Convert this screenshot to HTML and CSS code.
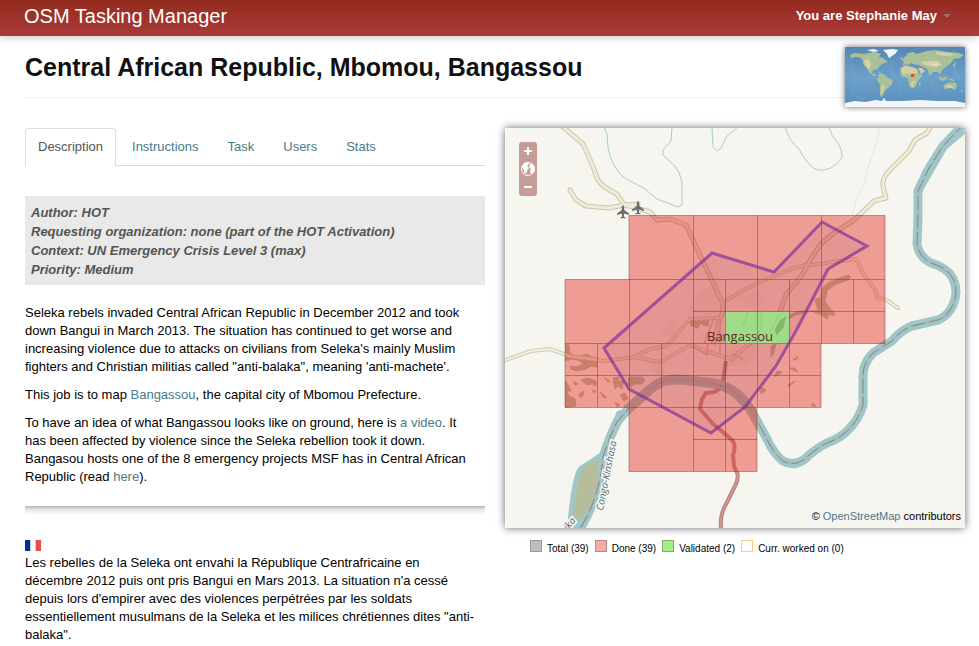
FILE: index.html
```html
<!DOCTYPE html>
<html lang="en">
<head>
<meta charset="utf-8">
<title>OSM Tasking Manager</title>
<link rel="stylesheet" href="styles.css">
</head>
<body>
<header class="topbar">
  <a class="brand" href="#">OSM Tasking Manager</a>
  <button class="user-menu" type="button">You are Stephanie May <span class="caret"></span></button>
</header>
<main class="container">
  <div class="page-header">
    <h1>Central African Republic, Mbomou, Bangassou</h1>
    <svg class="world" viewBox="0 0 120 60" role="img" aria-label="World location">
      <defs>
        <linearGradient id="sea" x1="0" y1="0" x2="0" y2="1"><stop offset="0" stop-color="#5687b4"/><stop offset=".5" stop-color="#6ba0c9"/><stop offset="1" stop-color="#5a8fbe"/></linearGradient>
      </defs>
      <rect width="120" height="60" fill="url(#sea)"/>
      <g fill="none" stroke="#82b1d3" stroke-width="3" opacity=".2">
        <path d="M6 20Q14 30 9 40T20 52M48 12Q42 24 51 32T54 50M88 30Q84 40 93 48M112 18Q105 26 116 32"/>
      </g>
      <g fill="#a8c199">
        <path d="M5 8L9 6L17 7L24 6L30 5L36 7L34 10L38 11L43 15L37 17L34 20L32 23L31 22L28 23L27 26L30 27L32 29L29 29L24 25L21 20L18 17L18 13L14 10L9 10L6 12Z"/>
        <path d="M34 27L39 27L43 31L48 33L47 37L44 40L41 43L38 47L37 51L35 48L35 38L32 33Z"/>
        <path d="M57 19L59 15L57 13L60 10L63 6L68 5L72 7L82 4L91 3L102 5L114 6L119 8L115 11L109 12L106 16L102 19L98 22L95 27L92 25L88 25L85 29L82 22L78 20L73 18L68 17L66 16L63 18L61 17Z"/>
        <path d="M55 22L60 18L68 20L72 22L74 27L78 28L73 34L71 39L67 42L64 38L63 31L56 29Z"/>
        <path d="M99 38L104 35L107 36L110 35L112 39L110 43L106 41L99 42Z"/>
        <path d="M94 29L98 31L101 29L102 32L98 34L94 32ZM103 31L110 33L108 34L103 32ZM108 18L111 14L110 19L108 21ZM55 11L57 10L58 13L56 13ZM74 36L76 34L75 39L74 38ZM116 43L118 42L116 46ZM33 25L37 26L35 27Z"/>
      </g>
      <g fill="#dbcfa6" opacity=".9">
        <path d="M19 13L23 12L26 16L25 21L23 22L20 18ZM56 21L61 19L72 22L73 26L57 27ZM73 21L77 21L80 24L76 27ZM75 15L83 14L93 14L97 18L91 20L83 19L80 18ZM101 38L107 38L108 41L102 41ZM37 38L40 38L37 49L36 45ZM67 34L70 34L68 41L66 38ZM91 5L105 6L110 8L103 9L92 8Z"/>
      </g>
      <path d="M38 3L47 2L53 3L50 7L44 11L42 7ZM22 3L29 2L34 4L28 5ZM0 59L0 56L10 54L20 55L31 53L37 54L39 51L41 54L57 54L75 53L93 54L110 54L120 56V60H0Z" fill="#f3f5f9"/>
      <path d="M86 17L92 16L94 19L88 19Z" fill="#dfe5e9" opacity=".6"/>
      <rect x="66" y="27" width="3" height="3" fill="#f03c28"/>
    </svg>
  </div>
  <div class="columns">
    <section class="info">
      <nav class="tabs">
        <a class="tab active" href="#">Description</a>
        <a class="tab" href="#">Instructions</a>
        <a class="tab" href="#">Task</a>
        <a class="tab" href="#">Users</a>
        <a class="tab" href="#">Stats</a>
      </nav>
      <div class="meta">
        Author: HOT<br>
        Requesting organization: none (part of the HOT Activation)<br>
        Context: UN Emergency Crisis Level 3 (max)<br>
        Priority: Medium
      </div>
      <p>Seleka rebels invaded Central African Republic in December 2012 and took<br>
      down Bangui in March 2013. The situation has continued to get worse and<br>
      increasing violence due to attacks on civilians from Seleka's mainly Muslim<br>
      fighters and Christian militias called "anti-balaka", meaning 'anti-machete'.</p>
      <p>This job is to map <a href="#">Bangassou</a>, the capital city of Mbomou Prefecture.</p>
      <p>To have an idea of what Bangassou looks like on ground, here is <a href="#">a video</a>. It<br>
      has been affected by violence since the Seleka rebellion took it down.<br>
      Bangasou hosts one of the 8 emergency projects MSF has in Central African<br>
      Republic (read <a href="#">here</a>).</p>
      <hr class="divider">
      <svg class="flag" viewBox="0 0 16 11" role="img" aria-label="Français"><path fill="#fff" d="M0 0h16v11H0z"/><path fill="#00318f" d="M0 0h5v11H0z"/><path fill="#c5cbe4" d="M5 0h1v11H5z"/><path fill="#f3c4c2" d="M10 0h1v11h-1z"/><path fill="#e1504b" d="M11 0h5v11h-5z"/></svg>
      <p lang="fr">Les rebelles de la Seleka ont envahi la République Centrafricaine en<br>
      décembre 2012 puis ont pris Bangui en Mars 2013. La situation n'a cessé<br>
      depuis lors d'empirer avec des violences perpétrées par les soldats<br>
      essentiellement musulmans de la Seleka et les milices chrétiennes dites "anti-<br>balaka".</p>
    </section>
    <section class="map-column">
      <div class="map">
        <svg class="map-canvas" viewBox="505 128 460 400" role="img" aria-label="Task grid over Bangassou">
          <defs>
            <path id="river" d="M966 122L943 146L928 170L918 191V217L917 244Q919 257 931 263Q948 268 953 279Q959 291 953 305Q948 316 938 320L912 326Q901 330 892 341L873 353Q863 363 863 376V405Q859 419 849 429Q841 438 827 443Q815 449 805 459Q794 467 783 461Q773 453 767 439L755 417Q744 398 733 391Q723 385 712 383L693 381Q677 378 664 381Q652 386 643 396L629 408L617 422Q609 438 603 457Q602 472 598 487Q593 507 580 529"/>
            <clipPath id="area"><path d="M629 215.500H885V343.500H821V407.500H757V471.500H629V407.500H565V279.500H629Z"/></clipPath>
            <g id="roads">
              <path d="M562 126L583 144Q590 158 598 180Q602 187 617 194Q624 207 629 206L650 212L657 220L670 219L686 225L722 302Q725 311 720 318L713 345"/>
              <path d="M570 190L576 200L586 206L609 208L624 205L638 204"/>
              <path d="M930 128L927 133L915 140L909 151L889 171Q882 178 883 186L886 198L874 201L853 221Q832 233 822 243L812 257L802 275L786 295L779 315L770 332Q762 338 750 343"/>
            </g>
            <g id="minor-roads">
              <path d="M750 343L732 359L718 355L691 345L660 362L634 357L605 361L569 356L550 349L531 351L503 361"/>
              <path d="M634 357L650 349L667 346L690 319L722 318M725 301L755 284L780 274Q797 265 811 265L856 259L864 275L876 291L877 298L885 299L898 308"/>
            </g>
          </defs>
          <rect x="505" y="128" width="460" height="400" fill="#f6f5f0"/>
          <g fill="none" stroke="#a4cfd0" stroke-width="1">
            <path d="M604 127L607 134L608 148Q611 165 623 177L645 189L657 199Q668 203 678 207L682 205V182Q680 172 675 166L663 155L663 150L671 141L672 127"/>
            <path d="M712 127L713 147L717 151L721 148L727 136L738 127M785 127Q789 141 799 149Q809 168 818 170Q831 172 842 158Q843 151 838 143Q831 136 829 127"/>
          </g>
          <path d="M879 128Q878 144 868 166Q866 183 856 200Q855 210 848 224" fill="none" stroke="#e9e5dc"/>
          <path d="M567 529Q572 470 580 466L600 453L617 411L629 408L614 439L606 460L602 486L593 507L579 529Z" fill="#9cc8c8"/>
          <use href="#river" fill="none" stroke="#9cc8c8" stroke-width="9" stroke-linejoin="round"/>
          <path d="M960 125L937 150L921 178L918 191L926 185L947 149L966 133Z" fill="#9cc8c8"/>
          <path d="M599 460Q583 464 579 476L572 516L580 520L587 511Q597 498 598 481Z" fill="#b5bd9c"/>
          <use href="#river" fill="none" stroke="#b0b6ba" stroke-width="2"/>
          <use href="#river" fill="none" stroke="#88868d" stroke-width="1" stroke-dasharray="14 4"/>
          <g fill="none" stroke-linejoin="round" stroke-linecap="round">
            <use href="#minor-roads" stroke="#d2ccb0" stroke-width="4"/>
            <use href="#roads" stroke="#cdc6a6" stroke-width="5"/>
            <use href="#minor-roads" stroke="#f1efe4" stroke-width="2"/>
            <use href="#roads" stroke="#efecdd" stroke-width="3"/>
          </g>
          <path d="M736 470Q740 477 735 486L724 508Q720 517 721 529" fill="none" stroke="#b97e77" stroke-width="4"/>
          <path d="M736 470Q740 477 735 486L724 508Q720 517 721 529" fill="none" stroke="#cc9790" stroke-width="2"/>

          <!-- completed tasks -->
          <g clip-path="url(#area)">
            <rect x="565" y="215" width="320" height="257" fill="#ef9d94"/>
            <g fill="#c97f69" stroke="#c97f69" stroke-linejoin="round">
              <path d="M565 344L569 345L570 353L578 357L587 354L592 357L597 358V367L591 366L586 369L577 371L571 369L570 366L576 367L584 364L578 360L572 359L565 361Z"/>
              <path d="M565 380L568 385L571 391L567 391L568 395L575 399L576 406L565 408ZM581 380L588 378L596 381L596 386L592 384L587 385ZM579 394L584 391L583 396L580 397ZM604 377L610 381L608 382ZM613 378L619 377L618 382L624 380L622 389L618 386L615 389ZM629 377L642 377L645 380L642 384L635 384L631 387L628 384ZM600 392L604 395L607 398L603 397ZM620 395L625 393L628 399L624 401ZM615 402L620 405L617 407ZM573 381L578 384L575 385ZM592 390L596 391L594 393Z"/>
              <path d="M821 289L828 283L839 278L849 275L851 277L848 280L834 285L827 291L825 301L831 310L834 312V316L829 314L827 319L821 315L812 311L796 315L783 322L779 327L776 338L771 342L776 325L786 316L800 311L818 311L815 299L821 298ZM771 346L776 343L774 353L771 357ZM794 359L798 356L796 360L793 359ZM790 368L795 368L798 372L793 370ZM777 371L782 372L777 376L774 376ZM761 387L766 390L761 394ZM788 385L795 381L789 387ZM812 403L816 406H812Z"/>
            </g>
            <path d="M689 317H709V326H704L701 324L697 329L690 325Z" fill="#c97f69"/>
            <g fill="#e28a81" opacity=".25"><path d="M691 300L707 288L718 292L724 302L722 318L702 318L687 313ZM725 355L736 346L760 344L748 367L731 366ZM666 322L674 318L682 331L671 338L661 332ZM738 297L758 289L769 303L751 308ZM649 359L666 360L663 376L650 371Z"/></g>
            <g fill="none" stroke-linejoin="round">
              <use href="#minor-roads" stroke="#db8475" stroke-width="4"/>
              <use href="#roads" stroke="#d47b6b" stroke-width="5"/>
              <use href="#minor-roads" stroke="#ea968b" stroke-width="2"/>
              <use href="#roads" stroke="#e59385" stroke-width="3"/>
              <path d="M704 344L714 318M720 318V354M690 345L707 355L708 343M743 359L732 354" stroke="#da8576" stroke-width="2"/>
              <use href="#river" stroke="#ba817c" stroke-width="10"/>
              <use href="#river" stroke="#d36a65" stroke-width="1"/>
              <path d="M726 361L723 381" stroke="#ca655e" stroke-width="4"/>
              <path d="M718 390L714 392L706 393L702 399L700 409L713 424L724 433L733 441Q736 447 733 455L734 466L738 476" stroke="#cf655f" stroke-width="4" stroke-linecap="round"/>
            </g>
          </g>
          <!-- validated tasks -->
          <rect x="725" y="312" width="64" height="32" fill="#a2e889"/>
          <g fill="#80c168"><path d="M787 316L780 320L775 329L776 336L784 327L785 320Z"/></g>
          <path d="M761 312V328L755 340M748 312L743 325M779 315L770 332" fill="none" stroke="#8ed977"/>
          <path d="M604 348L712 253L774 272L822 222L867 246L828 269L797 329L776 366L745 407L711 433L629 389Z" fill="#855a85" fill-opacity=".09"/>
          <g fill="none" stroke="#5a2820" stroke-opacity=".4" stroke-width="1">
            <path d="M629 215.500H885V343.500H821V407.500H757V471.500H629V407.500H565V279.500H629Z"/>
            <path d="M629 279.500H885M693 311.500H885M565 343.500H821M565 375.500H821M629 407.500H757M693 439.500H757"/>
            <path d="M597.500 343V407M629.500 279V407M661.500 343V407M693.500 215V471M725.500 279V471M757.500 215V407M789.500 279V407M821.500 215V343M853.500 279V343"/>
          </g>
          <text class="town" x="707" y="341">Bangassou</text>
          <path d="M604 348L712 253L774 272L822 222L867 246L828 269L797 329L776 366L745 407L711 433L629 389Z" fill="none" stroke="#7a2a9b" stroke-opacity=".65" stroke-width="3"/>
          <g fill="#6b6b6b">
            <path id="plane" d="M623 205Q624.500 206 624.200 210L629 213.500V215L624.200 213.500L623.800 216.500L625.500 217.600V218.500L623 218L620.500 218.500V217.600L622.200 216.500L621.800 213.500L617 215V213.500L621.800 210Q621.500 206 623 205Z"/>
            <use href="#plane" x="15" y="-4"/>
          </g>
          <text class="river-name" transform="translate(603 511) rotate(-79)">Congo-Kinshasa</text>
          <text class="river-name" transform="translate(568 531) rotate(-50)">ika</text>
        </svg>
        <div class="zoom">
          <button type="button" aria-label="Zoom in"><svg viewBox="0 0 18 18"><path d="M9 5v8M5 9h8" stroke="#fff" stroke-width="2"/></svg></button>
          <button type="button" aria-label="Zoom to full extent"><svg viewBox="0 0 18 18"><circle cx="9" cy="9" r="6.500" fill="#c59c97" stroke="#fff"/><path d="M3 7L5 3L9 2L10 4L8 6L10 8L8 11L7 14L5 12L5 10ZM11 4L14 4L16 8L15 12L12 14L11 11L12 9L10 7Z" fill="#fff"/></svg></button>
          <button type="button" aria-label="Zoom out"><svg viewBox="0 0 18 18"><path d="M5 9h8" stroke="#fff" stroke-width="2"/></svg></button>
        </div>
        <div class="attribution">© <a href="#">OpenStreetMap</a> contributors</div>
      </div>
      <ul class="legend">
        <li><span class="swatch total"></span>Total (39)</li>
        <li><span class="swatch done"></span>Done (39)</li>
        <li><span class="swatch validated"></span>Validated (2)</li>
        <li><span class="swatch working"></span>Curr. worked on (0)</li>
      </ul>
    </section>
  </div>
</main>
</body>
</html>
```
FILE: styles.css
```css
* { box-sizing: border-box; }

body {
  margin: 0;
  background: #fff;
  color: #000;
  font: 13px/18px "Liberation Sans", Arial, sans-serif;
}

a { color: #4a7b88; text-decoration: none; }

button {
  border: 0;
  padding: 0;
  background: none;
  font: inherit;
  cursor: pointer;
}

.topbar {
  display: flex;
  justify-content: space-between;
  align-items: center;
  height: 36px;
  padding: 0 28px 4px 24px;
  background: linear-gradient(#932b1f, #a93b38);
  box-shadow: 0 1px 8px rgba(0, 0, 0, .25);
}

.brand { color: #fff; font-size: 20px; line-height: 28px; }

.user-menu {
  display: flex;
  align-items: center;
  gap: 6px;
  color: #fff;
  font-weight: bold;
}

.caret {
  border: 4px solid transparent;
  border-top-color: #8d7775;
  border-bottom: 0;
}

.container { padding: 0 14px 0 25px; }

.page-header {
  position: relative;
  height: 62px;
  margin-bottom: 30px;
  padding-top: 13px;
  border-bottom: 1px solid #eee;
}

h1 {
  margin: 0;
  color: #111;
  font-size: 25px;
  line-height: 36px;
}

.world {
  position: absolute;
  top: 11px;
  right: 0;
  width: 120px;
  height: 60px;
  box-shadow: 0 0 6px rgba(0, 0, 0, .6);
}

.columns {
  display: grid;
  grid-template-columns: 1fr 1fr;
  gap: 20px;
}

.tabs {
  display: flex;
  gap: 3px;
  margin-bottom: 30px;
  border-bottom: 1px solid #ddd;
}

.tab {
  margin-bottom: -1px;
  padding: 9px 12px 10px;
  border: 1px solid transparent;
  border-bottom: 0;
  border-radius: 4px 4px 0 0;
}

.tab.active {
  border-color: #ddd;
  background: #fff;
  color: #555;
}

.meta {
  margin-bottom: 19px;
  padding: 7px 6px 6px;
  background: #e9e9e9;
  color: #555550;
  font-weight: bold;
  font-style: italic;
  line-height: 19px;
}

p { margin: 0 0 10px; }

.divider {
  height: 9px;
  margin: 20px 0 25px;
  border: 0;
  background: linear-gradient(#b5b5b5, #e6e6e6 40%, #fff);
}

.flag { display: block; width: 16px; height: 11px; margin-bottom: 3px; }

.map {
  position: relative;
  box-shadow: 0 0 8px rgba(0, 0, 0, .6);
}

.map-canvas { display: block; width: 100%; }

.town { fill: #5a2b24; font: 500 13px "Open Sans", "Noto Sans", sans-serif; }

.river-name {
  fill: #53686e;
  stroke: #f8f8f6;
  stroke-width: 3px;
  paint-order: stroke;
  font: italic 10px "Open Sans", "Noto Sans", sans-serif;
}

.zoom {
  position: absolute;
  top: 14px;
  left: 14px;
  display: flex;
  flex-direction: column;
  width: 18px;
  border-radius: 3px;
  background: #c59c97;
}

.zoom button { height: 18px; }
.zoom svg { display: block; width: 18px; height: 18px; }

.attribution {
  position: absolute;
  right: 4px;
  bottom: 3px;
  font-size: 11px;
}

.legend {
  display: flex;
  gap: 6px;
  margin: 12px 0 0 25px;
  padding: 0;
  list-style: none;
  font-size: 10px;
  line-height: 18px;
}

.legend li { display: flex; gap: 5px; }

.swatch { width: 12px; height: 12px; border: 1px solid #999; }
.total { background: #bfbfbf; }
.done { background: #f5aba8; border-color: #b58a88; }
.validated { background: #a2f283; border-color: #82ae72; }
.working { background: #fff; border-color: #fc8; }
```
